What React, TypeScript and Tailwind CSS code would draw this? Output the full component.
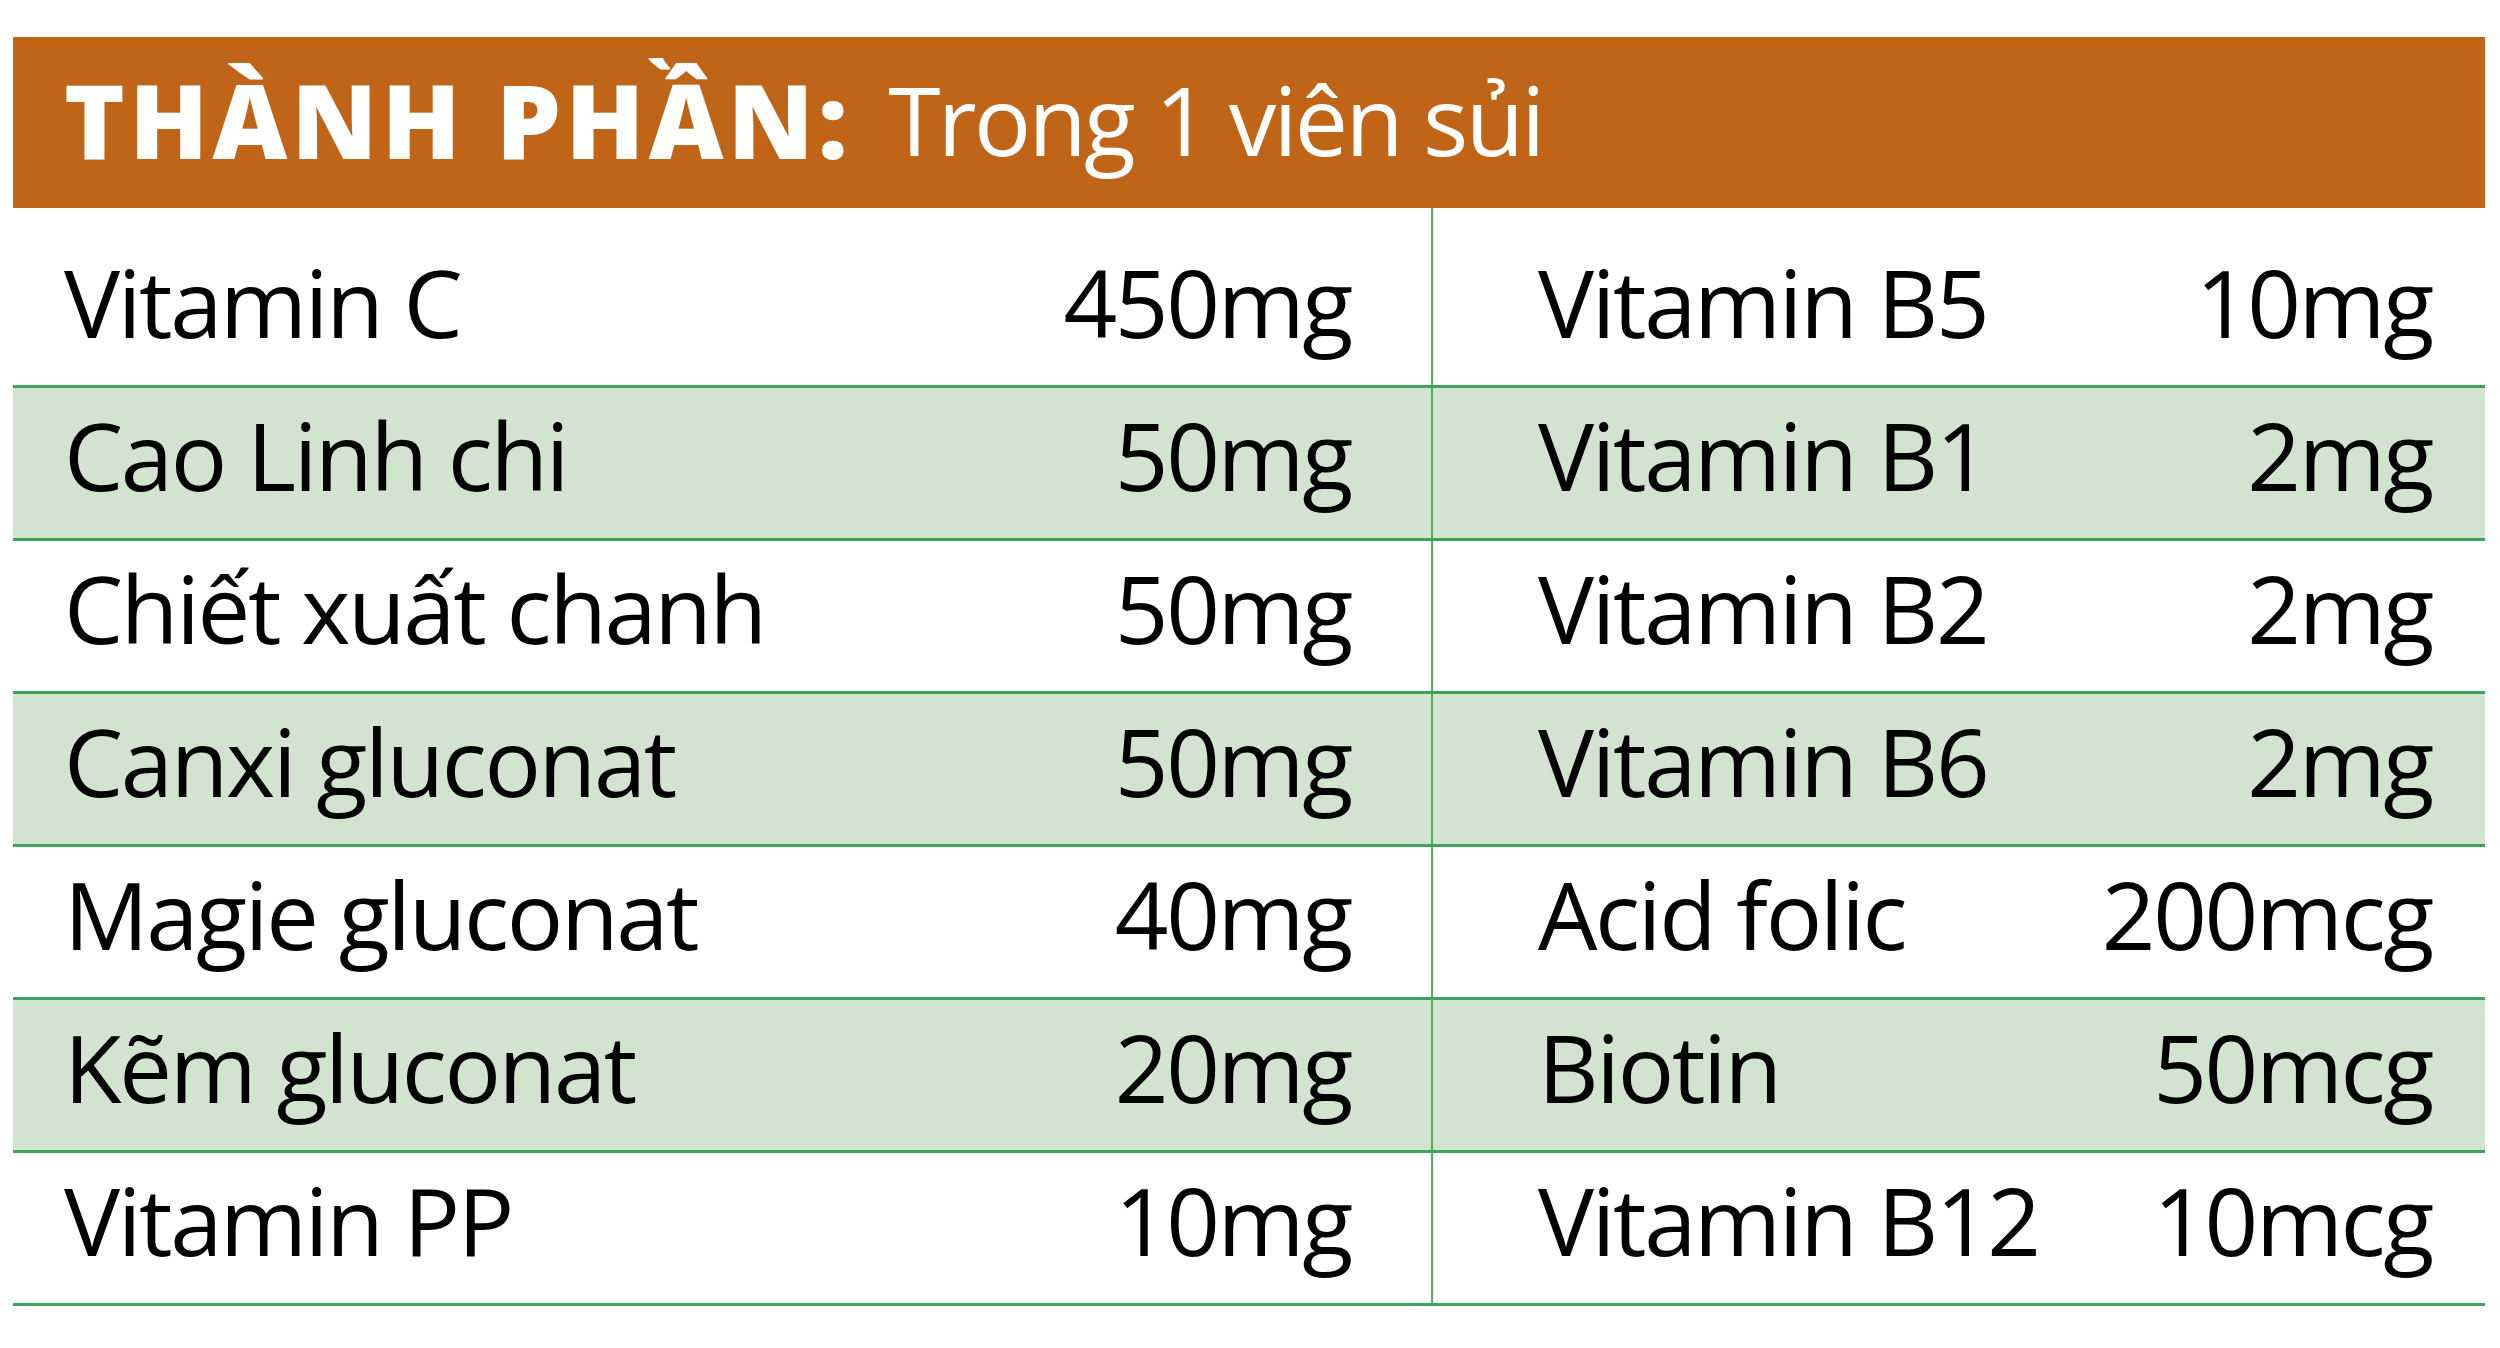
import React from "react";

const rows: [string, string, string, string][] = [
  ["Vitamin C", "450mg", "Vitamin B5", "10mg"],
  ["Cao Linh chi", "50mg", "Vitamin B1", "2mg"],
  ["Chiết xuất chanh", "50mg", "Vitamin B2", "2mg"],
  ["Canxi gluconat", "50mg", "Vitamin B6", "2mg"],
  ["Magie gluconat", "40mg", "Acid folic", "200mcg"],
  ["Kẽm gluconat", "20mg", "Biotin", "50mcg"],
  ["Vitamin PP", "10mg", "Vitamin B12", "10mcg"],
];

export default function App() {
  return (
    <div className="w-[2500px] h-[1348px] bg-white pt-[37px] pl-[13px] font-['Open_Sans','Liberation_Sans',sans-serif] text-black">
      <div className="w-[2472px]">
        {/* Header bar */}
        <div className="h-[171px] bg-[#C06418] flex items-center pl-[51px] pb-[6px] text-white leading-none">
          <span className="text-[103px] font-extrabold tracking-[0.042em]">THÀNH PHẦN:</span>
          <span className="text-[95px] ml-[36px] tracking-[-0.028em]">Trong 1 viên sủi</span>
        </div>

        {/* Ingredient rows */}
        {rows.map(([n1, v1, n2, v2], i) => (
          <div
            key={n1}
            className={`flex border-b-[3px] border-[#3DA35A] ${i % 2 === 1 ? "bg-[#D2E4CF]" : "bg-white"} ${i === 0 ? "h-[180px]" : "h-[153px]"}`}
          >
            <div
              className={`w-[1420px] flex items-center justify-between pl-[51px] pr-[80px] pb-[16px] border-r-2 border-[#4CAF63] text-[94px] leading-none tracking-[-0.025em] ${i === 0 ? "pt-[27px]" : ""}`}
            >
              <span>{n1}</span>
              <span>{v1}</span>
            </div>
            <div
              className={`flex-1 flex items-center justify-between pl-[105px] pr-[53px] pb-[16px] text-[94px] leading-none tracking-[-0.025em] ${i === 0 ? "pt-[27px]" : ""}`}
            >
              <span>{n2}</span>
              <span>{v2}</span>
            </div>
          </div>
        ))}
      </div>
    </div>
  );
}
